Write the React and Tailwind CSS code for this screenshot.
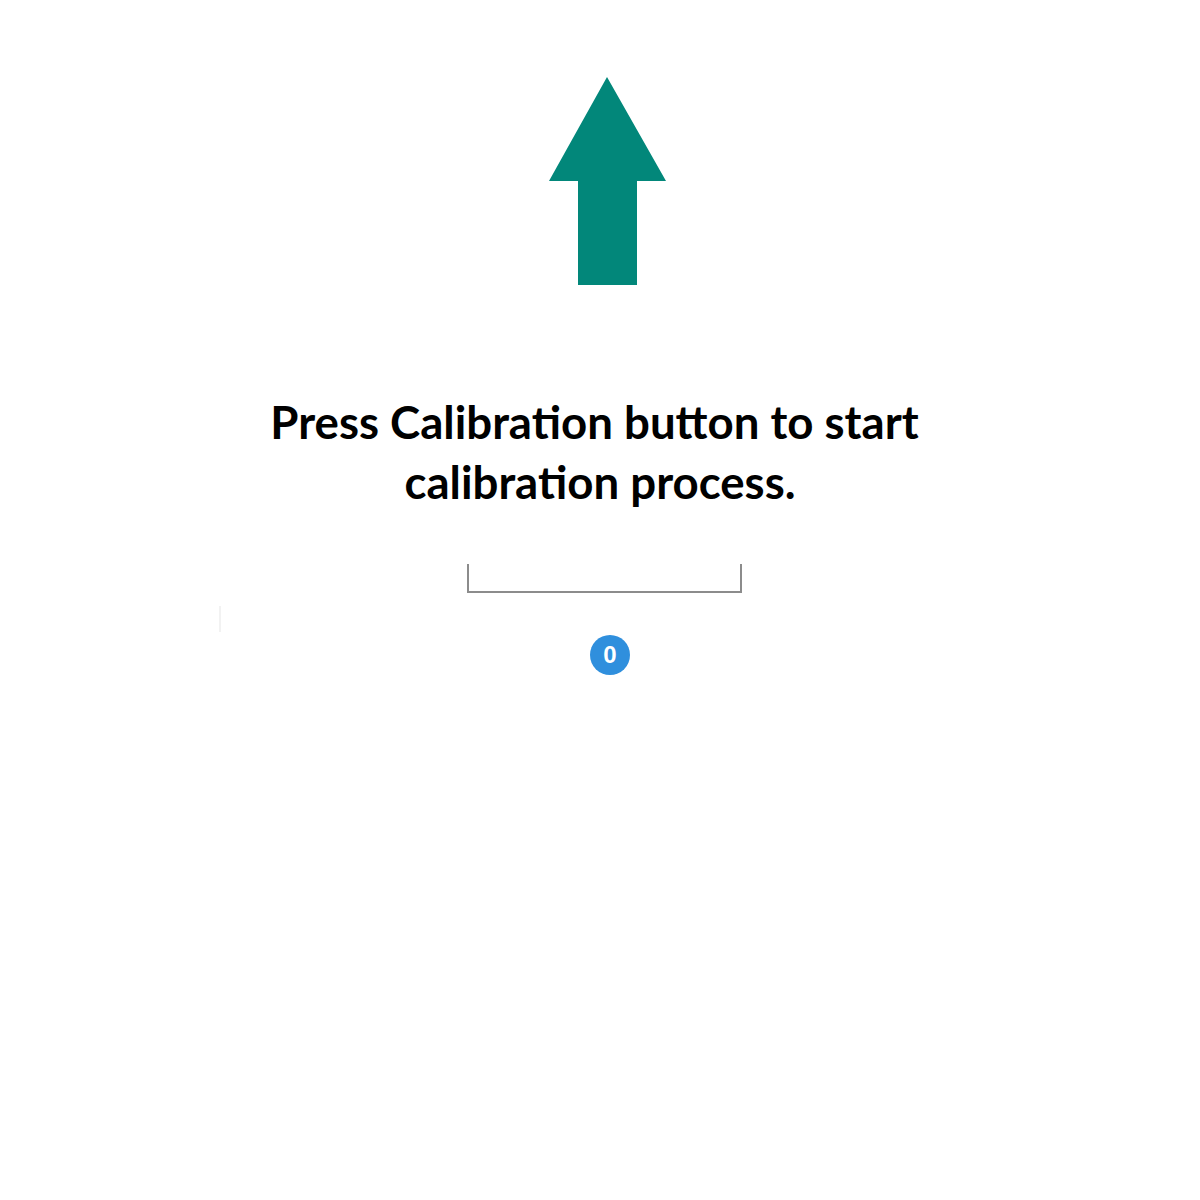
import React from "react";

// Up arrow drawn as a single polygon
function UpArrow() {
  return (
    <svg width="118" height="208" viewBox="0 0 118 208" className="block">
      <polygon points="58,0 117,104 88,104 88,208 29,208 29,104 0,104" fill="#02877a" />
    </svg>
  );
}

export default function App() {
  return (
    <div className="w-[1200px] h-[1200px] bg-white flex flex-col items-center pt-[77px]">
      <div className="ml-[15px]">
        <UpArrow />
      </div>

      <h1
        className="mt-[107px] text-center text-[45.6px] leading-[60px] font-bold text-black whitespace-nowrap"
        style={{ fontFamily: "Lato, 'Open Sans', sans-serif" }}
      >
        <span className="pr-[11px]">Press Calibration button to start</span>
        <br />
        calibration process.
      </h1>

      <div className="mt-[52px] ml-[8px] w-[275px] h-[29px] border-x-2 border-b-2 border-[#8c8c8c]" />

      <div className="w-full pl-[219px] mt-[13px]">
        <div className="w-[2px] h-[26px] bg-[#f2f2f2]" />
      </div>

      <div className="mt-[3px] ml-[20px] w-[40px] h-[40px] rounded-full bg-[#2f8fdd] flex items-center justify-center">
        <span
          className="text-white text-[24px] font-bold leading-none"
          style={{ fontFamily: "'Liberation Sans', Arial, sans-serif" }}
        >
          0
        </span>
      </div>
    </div>
  );
}
